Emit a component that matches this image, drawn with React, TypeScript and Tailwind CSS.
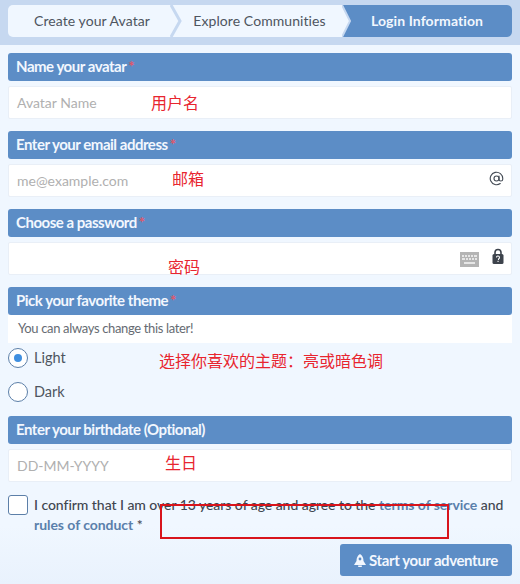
import { AtSign } from "lucide-react";

const font = "font-['Lato','Noto_Sans_CJK_SC',sans-serif]";

function SectionHeader({ label, required }: { label: string; required?: boolean }) {
  return (
    <div className="flex h-7 items-center rounded-[3px] bg-[#5c8dc6] px-2 pb-[1px] text-[15px] font-bold tracking-[-0.48px] text-[#f2f7fe]">
      {label}
      {required && <span className="ml-0.5 text-[#e0576b]">*</span>}
    </div>
  );
}

function Field({ placeholder, children }: { placeholder?: string; children?: React.ReactNode }) {
  return (
    <div className="mt-[5px] flex h-[33px] items-center justify-between rounded-[2px] border border-[#e9eff7] bg-white pl-2 pr-[7px] text-[14px] text-[#b0b0b0]">
      <span>{placeholder}</span>
      {children}
    </div>
  );
}

function Radio({ label, checked }: { label: string; checked?: boolean }) {
  return (
    <div className="flex h-5 items-center gap-[6px] text-[14.5px] text-[#4e5560]">
      <span className="flex h-5 w-5 items-center justify-center rounded-full border border-[#5c7fa8] bg-white">
        {checked && <span className="h-2 w-2 rounded-full bg-[#3f8fe0]" />}
      </span>
      {label}
    </div>
  );
}

function Annotation({ className, children }: { className: string; children: React.ReactNode }) {
  return <span className={`absolute text-[16px] leading-5 text-[#e8252f] ${className}`}>{children}</span>;
}

export default function App() {
  return (
    <div className={`relative h-[584px] w-[520px] overflow-hidden bg-gradient-to-b from-[#f0f7ff] from-90% to-[#e9f2fd] ${font}`}>
      {/* steps */}
      <div className="h-[45px] bg-[#c6d8f0] px-2 pt-[5px]">
        <div className="flex h-8 overflow-hidden rounded-[5px] bg-[#f0f7ff] text-[14px] tracking-[0.07px]">
          <div className="flex w-[164px] items-center justify-center pb-[1px] pl-1 text-[#4e5560]">Create your Avatar</div>
          <svg width="14" height="32" viewBox="0 0 14 32" className="-ml-[2px] shrink-0">
            <path d="M1 0 L10 16 L1 32" fill="none" stroke="#c6d8f0" strokeWidth="3" />
          </svg>
          <div className="flex w-[158px] items-center justify-center pb-[1px] pr-[7px] text-[#4e5560]">Explore Communities</div>
          <svg width="12" height="32" viewBox="0 0 12 32" className="shrink-0">
            <path d="M0 0 H12 V32 H0 L8 16 Z" fill="#5c8dc6" />
            <path d="M0 0 L8 16 L0 32" fill="none" stroke="#c6d8f0" strokeWidth="2" />
          </svg>
          <div className="flex flex-1 items-center justify-center bg-[#5c8dc6] pb-[1px] pr-[12px] font-bold tracking-[0.1px] text-[#f2f7fe]">
            Login Information
          </div>
        </div>
      </div>

      {/* form */}
      <div className="flex flex-col px-2 pt-2">
        <SectionHeader label="Name your avatar" required />
        <Field placeholder="Avatar Name" />

        <div className="mt-[12px]">
          <SectionHeader label="Enter your email address" required />
          <Field placeholder="me@example.com">
            <AtSign size={15} strokeWidth={1.8} className="-mt-1 text-[#444b55]" />
          </Field>
        </div>

        <div className="mt-[12px]">
          <SectionHeader label="Choose a password" required />
          <Field>
            <div className="flex items-center gap-[13px]">
              <svg width="19" height="15" viewBox="0 0 19 15" className="mt-[1px]">
                <rect width="19" height="15" fill="#b4b4b4" />
                <path
                  d="M2 3h2v2H2zM5 3h2v2H5zM8 3h2v2H8zM11 3h2v2h-2zM14 3h3v2h-3zM2 6h3v2H2zM6 6h2v2H6zM9 6h2v2H9zM12 6h2v2h-2zM15 6h2v2h-2zM4 10h11v2H4z"
                  fill="#e6e6e6"
                />
              </svg>
              <svg width="12" height="16" viewBox="0 0 12 16" className="-mt-[5px]">
                <path d="M3 7V4.5a3 3 0 0 1 6 0V7" fill="none" stroke="#3d434c" strokeWidth="1.6" />
                <rect x="0.5" y="6" width="11" height="10" rx="1.5" fill="#3d434c" />
                <path d="M4.5 9.5a1.5 1.5 0 1 1 2 1.4V12" fill="none" stroke="#fff" strokeWidth="1.1" />
                <rect x="5.5" y="12.8" width="1.1" height="1.2" fill="#fff" />
              </svg>
            </div>
          </Field>
        </div>

        <div className="mt-[12px]">
          <SectionHeader label="Pick your favorite theme" required />
          <div className="flex h-7 items-center bg-white px-2.5 text-[13px] tracking-[-0.35px] text-[#666b72]">
            You can always change this later!
          </div>
          <div className="mt-[5px] flex flex-col gap-[14px]">
            <Radio label="Light" checked />
            <Radio label="Dark" />
          </div>
        </div>

        <div className="mt-[14px]">
          <SectionHeader label="Enter your birthdate (Optional)" />
          <Field placeholder="DD-MM-YYYY" />
        </div>

        <div className="mt-[13px] flex gap-[6px]">
          <span className="h-5 w-5 shrink-0 rounded-[3px] border border-[#5c7fa8] bg-white" />
          <p className="text-[14px] font-medium leading-5 tracking-[-0.05px] text-[#3f4650]">
            I confirm that I am over 13 years of age and agree to the{" "}
            <span className="font-bold text-[#5a80ab]">terms of service</span> and{" "}
            <span className="font-bold text-[#5a80ab]">rules of conduct</span> *
          </p>
        </div>

        <div className="mt-[9px] flex justify-end">
          <button
            type="button"
            className="flex h-8 w-[172px] items-center justify-center gap-[3px] rounded-[3px] bg-[#5c8dc6] text-[15px] font-bold tracking-[-0.4px] text-[#f2f7fe]"
          >
            <svg width="12" height="13" viewBox="0 0 12 13">
              <path d="M6 0C8.5 1.5 9.5 4 9.5 7l2.5 4H0l2.5-4C2.5 4 3.5 1.5 6 0Z" fill="#f2f7fe" />
              <circle cx="6" cy="5" r="1.4" fill="#5c8dc6" />
              <rect x="4.2" y="11.5" width="3.6" height="1.5" fill="#f2f7fe" />
            </svg>
            Start your adventure
          </button>
        </div>
      </div>

      {/* red annotations */}
      <Annotation className="left-[151px] top-[93px]">用户名</Annotation>
      <Annotation className="left-[172px] top-[169px]">邮箱</Annotation>
      <Annotation className="left-[168px] top-[257px]">密码</Annotation>
      <Annotation className="left-[159px] top-[351px]">选择你喜欢的主题：亮或暗色调</Annotation>
      <Annotation className="left-[165px] top-[453px]">生日</Annotation>
      <div className="absolute left-[160px] top-[504px] h-[35px] w-[289px] border-2 border-[#d8141c]" />
    </div>
  );
}
